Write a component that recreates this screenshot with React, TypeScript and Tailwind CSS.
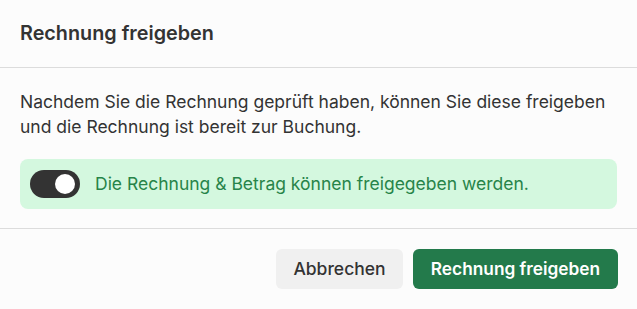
import React, { useState } from "react";

export default function App() {
  const [on, setOn] = useState(true);
  return (
    <div
      className="w-[637px] h-[309px] bg-[#fcfcfc] text-[#333333] overflow-hidden"
      style={{ fontFamily: "Inter, 'Noto Sans', sans-serif" }}
    >
      <div className="h-[68px] px-5 flex items-center border-b border-[#dcdcdc]">
        <h2 className="text-[19.8px] font-semibold leading-none">Rechnung freigeben</h2>
      </div>
      <div className="px-5 pt-[21px] pb-[19px] border-b border-[#dcdcdc]">
        <p className="text-[17.5px] leading-[25px]">
          Nachdem Sie die Rechnung geprüft haben, können Sie diese freigeben
          <br />
          und die Rechnung ist bereit zur Buchung.
        </p>
        <div className="mt-[20px] h-[50px] rounded-lg bg-[#d4f8df] flex items-center px-[10px] gap-[15px]">
          <button
            onClick={() => setOn(!on)}
            className={`w-[50px] h-[28px] rounded-full flex items-center px-[5px] ${on ? "bg-[#333333] justify-end" : "bg-[#cccccc] justify-start"}`}
          >
            <span className="w-[20px] h-[20px] rounded-full bg-white block" />
          </button>
          <span className="text-[17.5px] text-[#278449]">
            Die Rechnung &amp; Betrag können freigegeben werden.
          </span>
        </div>
      </div>
      <div className="flex justify-end gap-[10px] px-[19px] pt-[20px]">
        <button className="h-[40px] w-[127px] rounded-md bg-[#f0f0f0] text-[17.5px] font-medium text-[#333333]">
          Abbrechen
        </button>
        <button className="h-[40px] w-[205px] rounded-md bg-[#237a4b] text-[17.3px] font-semibold text-white">
          Rechnung freigeben
        </button>
      </div>
    </div>
  );
}
